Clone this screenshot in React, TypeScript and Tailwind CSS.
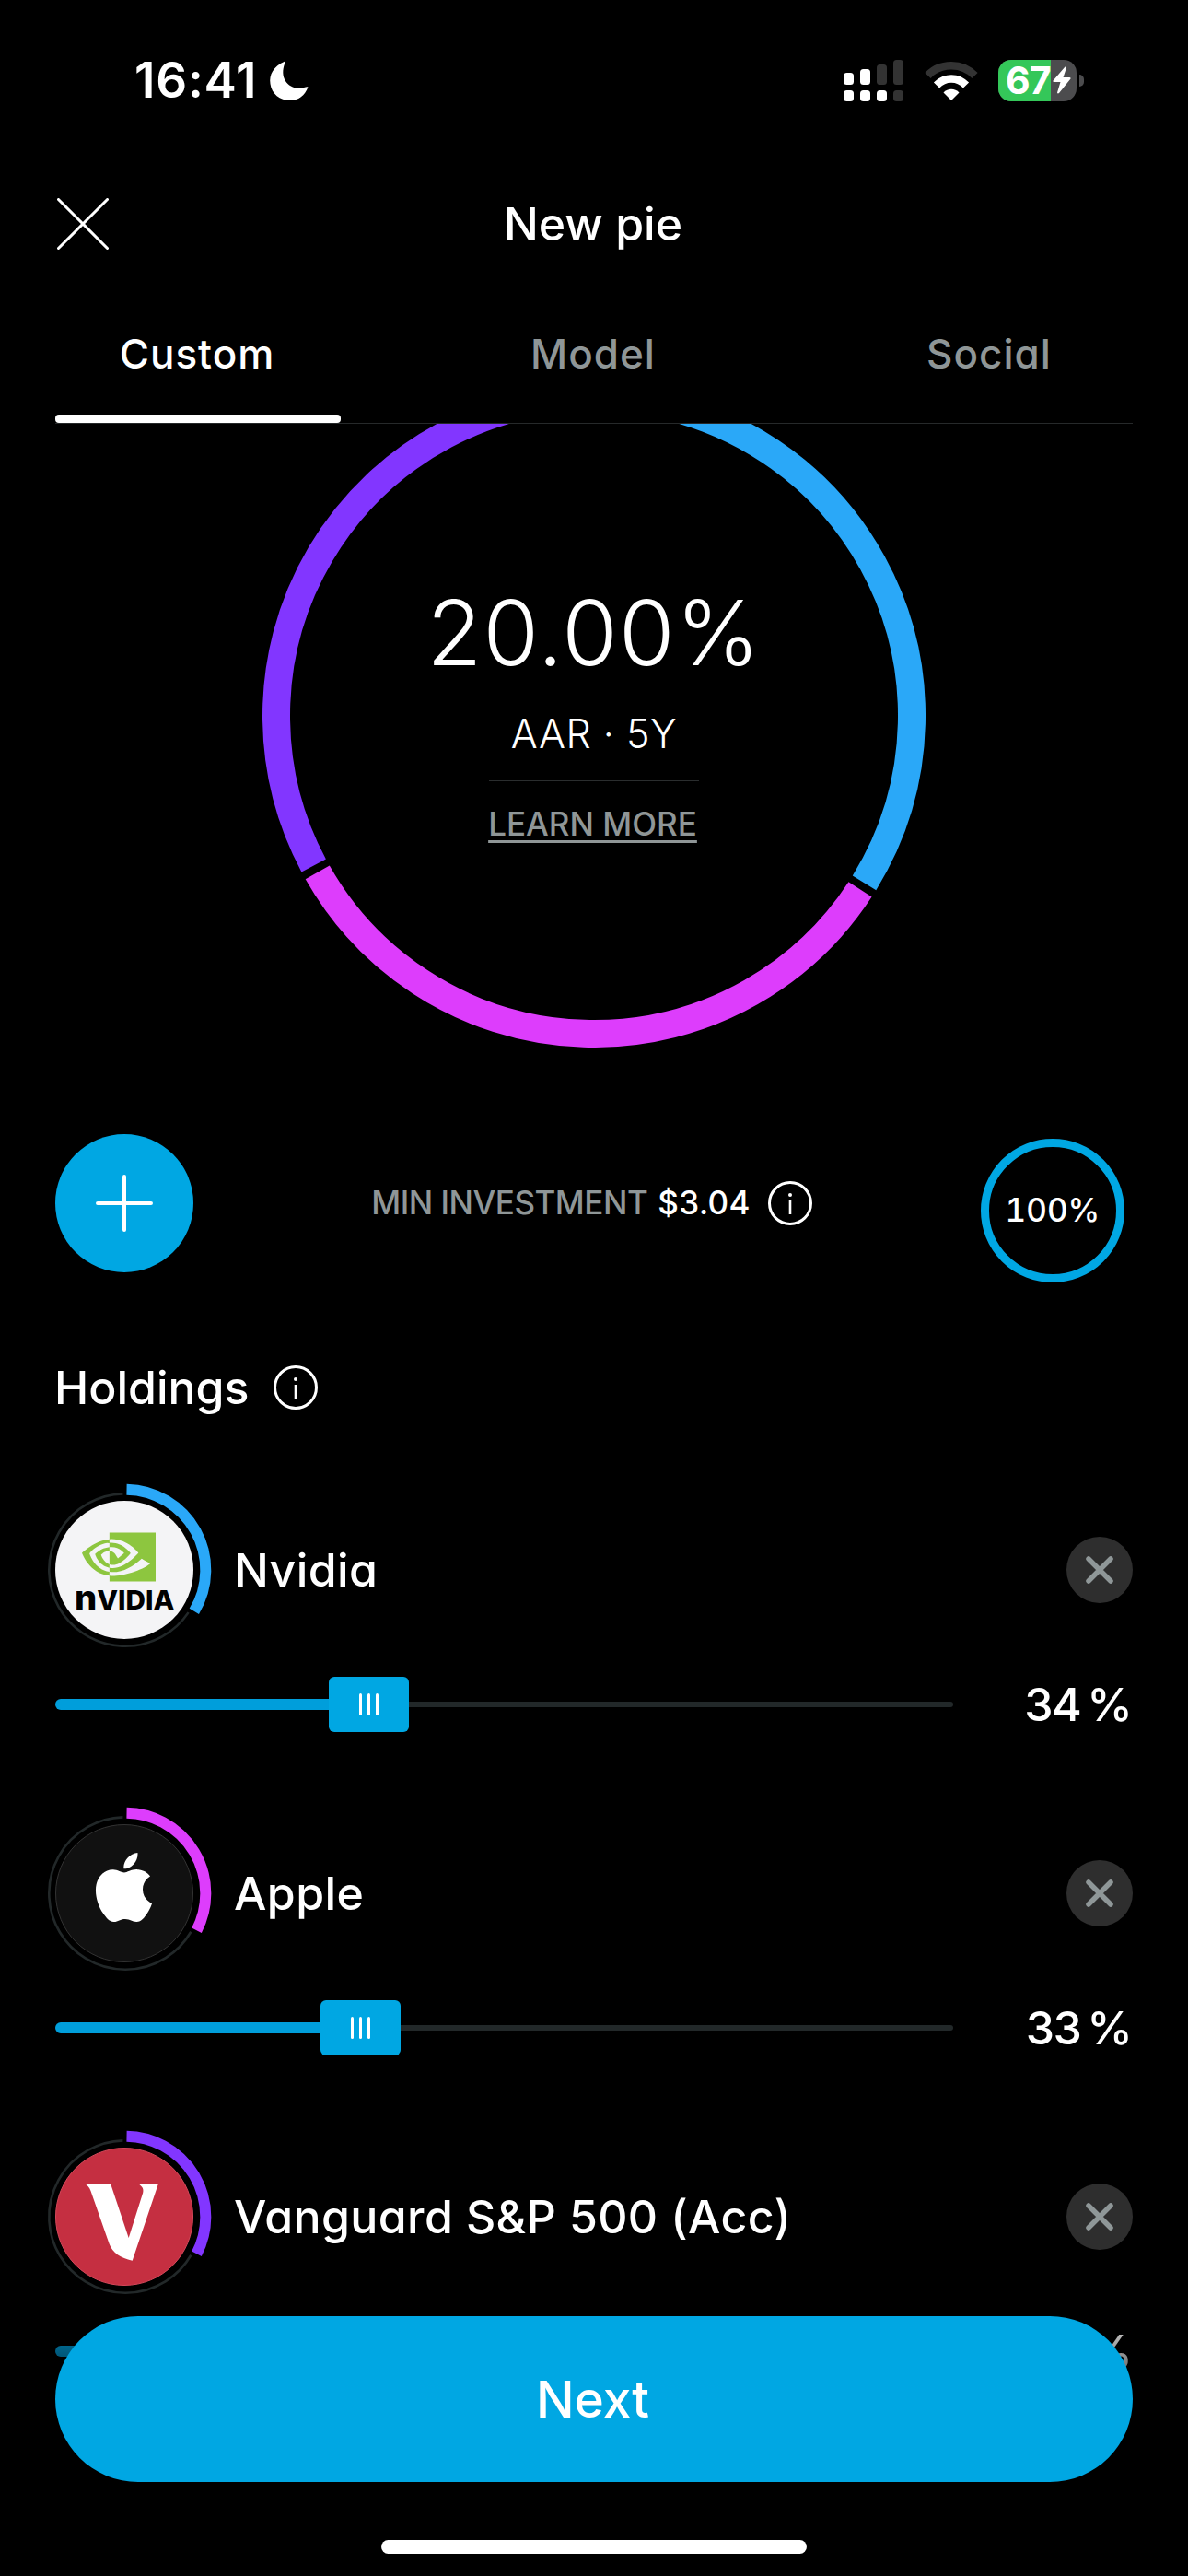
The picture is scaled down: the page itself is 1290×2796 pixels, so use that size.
import type { ReactNode } from "react";
import { SiApple, SiNvidia } from "react-icons/si";

const point = (c: number, r: number, deg: number) => {
  const a = ((deg - 90) * Math.PI) / 180;
  return `${(c + r * Math.cos(a)).toFixed(2)} ${(c + r * Math.sin(a)).toFixed(2)}`;
};

// angles are clockwise from 12 o'clock
const arc = (c: number, r: number, from: number, to: number) =>
  `M${point(c, r, from)}A${r} ${r} 0 ${to - from > 180 ? 1 : 0} 1 ${point(c, r, to)}`;

const slices = [
  { color: "#2aa8f8", from: 0.7, to: 121.7 },
  { color: "#dd3dfc", from: 123.1, to: 240.5 },
  { color: "#8236ff", from: 241.9, to: 359.3 },
];

const holdings = [
  {
    name: "Nvidia",
    value: 34,
    color: "#2aa8f8",
    logo: (
      <div className="flex h-full w-full flex-col items-center rounded-full bg-[#f4f4f6]">
        <SiNvidia size={80} className="mt-[21px] -ml-[12px] text-[#8dc63f]" />
        <div className="-mt-[3px] h-[20px] scale-x-[1.06] text-[28px] leading-[20px] font-extrabold whitespace-nowrap text-black">
          <span className="text-[36px] leading-[0px]">n</span>VIDIA
        </div>
      </div>
    ),
  },
  {
    name: "Apple",
    value: 33,
    color: "#dd3dfc",
    logo: (
      <div className="flex h-full w-full items-center justify-center rounded-full border border-[#333] bg-[#111]">
        <SiApple size={75} className="-mt-[12px] -ml-[2px] text-white" />
      </div>
    ),
  },
  {
    name: "Vanguard S&P 500 (Acc)",
    value: 33,
    color: "#8236ff",
    logo: (
      <div className="h-full w-full rounded-full border border-[#d5485a] bg-[#c52f41]">
        <svg viewBox="1 1 148 148" className="h-full w-full" fill="#fff">
          <path d="M32 39H60L79.7 98L95.2 49C96.3 44 94 42 90 39H112L83.7 122.7C71 120 62 114 58.7 104.7L38.5 47C37 43 35 41 32 39Z" />
        </svg>
      </div>
    ),
  },
];

const InfoIcon = () => (
  <svg width="48" height="48" viewBox="0 0 48 48" fill="none" stroke="#fff" className="shrink-0">
    <circle cx="24" cy="24" r="22.5" strokeWidth="3" />
    <path d="M24 21V36" strokeWidth="2.6" />
    <circle cx="24" cy="15" r="2" fill="#fff" stroke="none" />
  </svg>
);

const StatusBar = () => (
  <div className="flex h-[174px] shrink-0 items-center justify-between pr-[113px] pl-[146px]">
    <div className="flex items-center gap-[13px]">
      <span className="text-[53px] leading-none font-semibold tracking-[0.8px]">16:41</span>
      <svg width="43" height="43" viewBox="0 0 43 43" fill="#fff">
        <path d="M16.5 1C5 6 0 15 1.5 25C3 36 12 43 23 43C32 43 39 38 42.5 28.5C41.5 28 40 28.5 38 29C23 33 10 20 17.5 2.3C18 1 17.5 .6 16.5 1Z" />
      </svg>
    </div>
    <div className="flex items-center">
      <svg width="65" height="45" viewBox="0 0 65 45" fill="#fff">
        <rect x="0" y="14" width="11" height="13" rx="3.5" />
        <rect x="18" y="10" width="11" height="17" rx="3.5" />
        <rect x="36" y="5" width="11" height="22" rx="3.5" fill="#333" />
        <rect x="54" y="0" width="11" height="27" rx="3.5" fill="#333" />
        <rect x="0" y="33" width="11" height="12" rx="3.5" />
        <rect x="18" y="33" width="11" height="12" rx="3.5" />
        <rect x="36" y="33" width="11" height="12" rx="3.5" />
        <rect x="54" y="33" width="11" height="12" rx="3.5" fill="#333" />
      </svg>
      <svg width="58" height="43" viewBox="0 0 58 43" className="ml-[23px]">
        <path d="M3.5 16C17 1.5 41 1.5 54.500 16" fill="none" stroke="#333" strokeWidth="8.5" />
        <path d="M13 26.500C22 17 36 17 45 26.500" fill="none" stroke="#fff" strokeWidth="8.5" />
        <path d="M20.5 34.500C25 29.500 33 29.500 37.500 34.500L30 42Q29 43 28 42Z" fill="#fff" />
      </svg>
      <div className="relative ml-[22px] flex h-[45px] w-[85px] items-center rounded-[14px] bg-[#4c4c4e]">
        <div className="absolute inset-y-0 left-0 w-[57px] rounded-l-[14px] bg-[#34c759]" />
        <span className="relative ml-[8px] text-[41px] leading-[45px] font-bold tracking-[-1px]">67</span>
        <svg width="20" height="30" viewBox="0 0 20 30" fill="#fff" className="absolute top-[7px] left-[59px]">
          <path d="M13.5 .5L.5 15.5Q0 17 1.5 17H8.5L5 28.5Q5.5 30 7 29L19.5 13.5Q20 12 18.5 12H11.5L15 1.5Q14.5 0 13.5 .5Z" />
        </svg>
      </div>
      <div className="ml-[3px] h-[13px] w-[5px] rounded-r-full bg-[#4c4c4e]" />
    </div>
  </div>
);

const Tab = ({ active, children }: { active?: boolean; children: ReactNode }) => (
  <div className="flex w-[310px] flex-col">
    <div
      className={`flex h-[138px] items-center justify-center pt-[6px] pr-[2px] text-[44px] font-medium tracking-[1px] ${active ? "text-white" : "text-[#8f9697]"}`}
    >
      {children}
    </div>
    <div className={`h-[9px] rounded-[4px] ${active ? "bg-white" : ""}`} />
  </div>
);

const Holding = ({ name, value, color, logo }: (typeof holdings)[number]) => {
  const end = value * 3.6;
  const left = value * 8.73;
  return (
    <div className="h-[351px] shrink-0">
      <div className="flex h-[186px] items-center">
        <div className="relative h-[150px] w-[150px]">
          {logo}
          <svg width="190" height="190" className="absolute -top-[19.5px] -left-[19px]" fill="none">
            <path d={arc(95, 87.3, 1, end - 1.4)} stroke={color} strokeWidth="12" />
            <path d={arc(95, 82.7, end + 1.5, 358.2)} stroke="#222829" strokeWidth="2.6" />
          </svg>
        </div>
        <span className="ml-[44px] flex-1 text-[50px] leading-none font-medium tracking-[0.4px]">{name}</span>
        <button className="flex h-[72px] w-[72px] items-center justify-center rounded-full bg-[#2e2e2e]">
          <svg width="30" height="30" viewBox="0 0 30 30" stroke="#8f9798" strokeWidth="5.5" strokeLinecap="round">
            <path d="M3 3L27 27M27 3L3 27" />
          </svg>
        </button>
      </div>
      <div className="mt-[23px] flex h-[60px] items-center justify-between">
        <div className="flex h-[60px] w-[975px] items-center">
          <div className="h-[12px] rounded-l-full bg-[#009edb]" style={{ width: left }} />
          <div className="flex h-[60px] w-[87px] shrink-0 items-center justify-center gap-[6px] rounded-[6px] bg-[#00a7e3]">
            <div className="h-[24px] w-[3px] rounded-full bg-white" />
            <div className="h-[24px] w-[3px] rounded-full bg-white" />
            <div className="h-[24px] w-[3px] rounded-full bg-white" />
          </div>
          <div className="h-[6px] flex-1 rounded-r-full bg-[#222829]" />
        </div>
        <div className="flex items-center gap-[7px] text-[50px] leading-none font-medium">
          <span className="tracking-[-1.5px]">{value}</span>
          <span>%</span>
        </div>
      </div>
    </div>
  );
};

const App = () => {
  return (
    <div className="relative flex h-[2796px] w-[1290px] flex-col overflow-hidden bg-black font-['Inter',sans-serif] text-white [font-feature-settings:'cv11']">
      <StatusBar />

      <header className="grid h-[138px] shrink-0 grid-cols-[56px_1fr_56px] items-center px-[62px]">
        <svg width="56" height="56" viewBox="0 0 56 56" stroke="#fff" strokeWidth="3" strokeLinecap="round">
          <path d="M1.5 1.5L54.5 54.5M54.5 1.5L1.5 54.5" />
        </svg>
        <h1 className="pr-[2px] text-center text-[50px] leading-none font-medium">New pie</h1>
      </header>

      <nav className="mx-[60px] flex shrink-0 justify-between border-b border-[#26292a]">
        <Tab active>Custom</Tab>
        <Tab>Model</Tab>
        <Tab>Social</Tab>
      </nav>

      <main className="flex min-h-0 flex-1 flex-col overflow-hidden px-[60px]">
        <div className="relative mx-auto -mt-[43.5px] h-[720px] w-[720px] shrink-0">
          <svg width="720" height="720" fill="none">
            {slices.map((s) => (
              <path key={s.color} d={arc(360, 345, s.from, s.to)} stroke={s.color} strokeWidth="30" />
            ))}
          </svg>
          <div className="absolute inset-0 flex flex-col items-center pt-[210px]">
            <span className="h-[120px] text-[98px] leading-[120px] font-light tracking-[1.2px]">20.00%</span>
            <span className="mt-[24px] h-[50px] text-[43px] leading-[50px] font-light tracking-[0.5px]">AAR · 5Y</span>
            <div className="mt-[26.5px] h-px w-[228px] bg-[#2a2d2e]" />
            <span className="mt-[24.5px] mr-[3px] h-[42px] text-[35px] leading-[42px] font-medium text-[#8f9697] underline decoration-[3px] underline-offset-[5px]">
              LEARN MORE
            </span>
          </div>
        </div>

        <div className="mt-[94px] flex h-[161px] shrink-0 items-start justify-between pr-[9px]">
          <button className="flex h-[150px] w-[150px] items-center justify-center rounded-full bg-[#00a7e3]">
            <svg width="64" height="64" viewBox="0 0 64 64" stroke="#fff" strokeWidth="4" strokeLinecap="round">
              <path d="M32 3V61M3 32H61" />
            </svg>
          </button>
          <div className="flex h-[150px] items-center pl-[10px] text-[35px] leading-none font-medium">
            <span className="tracking-[-0.5px] text-[#8f9697]">MIN INVESTMENT</span>
            <span className="mr-[19px] ml-[11px] tracking-[0.3px]">$3.04</span>
            <InfoIcon />
          </div>
          <div className="mt-[5px] flex h-[156px] w-[156px] items-center justify-center rounded-full border-[9px] border-[#00a7e3] text-[35px] font-medium [font-feature-settings:'tnum']">
            100%
          </div>
        </div>

        <div className="mt-[90px] -ml-px flex h-[48px] shrink-0 items-center gap-[26px]">
          <h2 className="text-[50px] leading-none font-medium">Holdings</h2>
          <InfoIcon />
        </div>

        <div className="mt-[81px]">
          {holdings.map((h) => (
            <Holding key={h.name} {...h} />
          ))}
        </div>
      </main>

      <div className="absolute inset-x-0 bottom-0 flex h-[300px] flex-col items-center bg-linear-to-b from-transparent to-black to-[138px] px-[60px] pt-[18px]">
        <button className="h-[180px] w-full rounded-full bg-[#00a7e3] pr-[3px] text-[55px] leading-none font-medium">
          Next
        </button>
        <div className="mt-[63px] h-[15px] w-[462px] rounded-full bg-white" />
      </div>
    </div>
  );
};

export default App;
